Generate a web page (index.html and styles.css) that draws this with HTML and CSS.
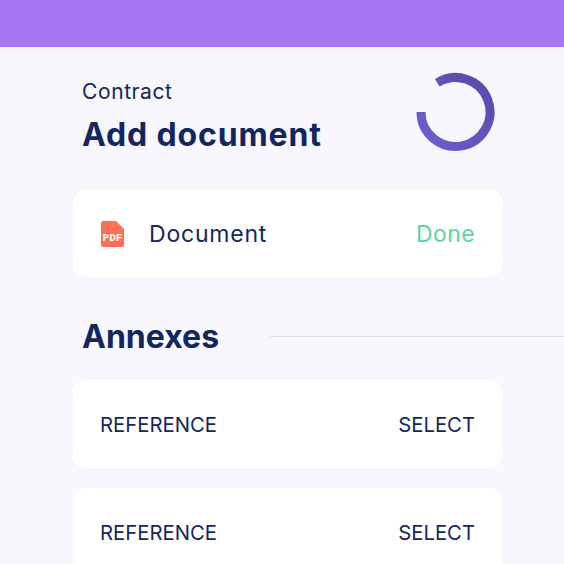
FILE: index.html
```html
<!DOCTYPE html>
<html lang="en">
<head>
    <meta charset="UTF-8">
    <meta name="viewport" content="width=device-width, initial-scale=1.0">
    <title>Add document</title>
    <link rel="stylesheet" href="styles.css">
</head>
<body>

    <!-- Top bar -->
    <div class="top-bar"></div>

    <main class="content">

        <!-- Header -->
        <header class="page-header">
            <div class="titles">
                <p class="eyebrow">Contract</p>
                <h1 class="page-title">Add document</h1>
            </div>
            <svg class="progress" width="80" height="80" viewBox="0 0 80 80">
                <defs>
                    <linearGradient id="ringGradient" x1="0" y1="1" x2="1" y2="0">
                        <stop offset="0" stop-color="#6c5fd2"/>
                        <stop offset="1" stop-color="#574aa8"/>
                    </linearGradient>
                </defs>
                <path d="M5 40 A34.5 34.5 0 1 0 21.3 10.7" fill="none" stroke="url(#ringGradient)" stroke-width="9"/>
            </svg>
        </header>

        <!-- Document card -->
        <section class="card card-document">
            <div class="card-left">
                <svg class="pdf-icon" width="23" height="26" viewBox="0 0 23 26">
                    <path d="M2 0 H15 L23 8 V24 A2 2 0 0 1 21 26 H2 A2 2 0 0 1 0 24 V2 A2 2 0 0 1 2 0 Z" fill="#fd6f57"/>
                    <text class="pdf-label" x="11.5" y="20" text-anchor="middle">PDF</text>
                </svg>
                <span class="doc-name">Document</span>
            </div>
            <span class="status-done">Done</span>
        </section>

        <!-- Annexes -->
        <div class="section-head">
            <h2 class="section-title">Annexes</h2>
            <div class="section-line"></div>
        </div>

        <section class="card card-annex">
            <span class="annex-text">REFERENCE</span>
            <span class="annex-text">SELECT</span>
        </section>

        <section class="card card-annex">
            <span class="annex-text">REFERENCE</span>
            <span class="annex-text">SELECT</span>
        </section>

    </main>

</body>
</html>
```

FILE: styles.css
```css
html, body {
    height: 100%;
}

body {
    margin: 0;
    font-family: "Inter", "Open Sans", sans-serif;
    color: #14265f;
    background-color: #f8f7fe;
    overflow: hidden;
}

/* Top bar */
.top-bar {
    height: 47px;
    background-color: #a875f2;
}

.content {
    height: 517px;
    box-sizing: border-box;
    padding: 25px 0 0 73px;
    overflow: hidden;
}

/* Header */
.page-header {
    display: flex;
    justify-content: space-between;
    align-items: flex-start;
    width: 429px;
    height: 118px;
}

.titles {
    padding: 10px 0 0 9px;
}

.eyebrow {
    margin: 0;
    font-size: 21px;
    line-height: 20px;
    letter-spacing: 0.6px;
}

.page-title {
    margin: 15px 0 0;
    font-size: 32px;
    line-height: 36px;
    font-weight: 700;
    letter-spacing: 0.85px;
}

.progress {
    margin-right: 6px;
}

/* Cards */
.card {
    display: flex;
    justify-content: space-between;
    align-items: center;
    width: 429px;
    box-sizing: border-box;
    padding: 0 27px;
    background-color: #fff;
    border-radius: 13px;
}

.card-document {
    height: 87px;
}

.card-annex {
    height: 88px;
    margin-bottom: 20px;
}

.card-left {
    display: flex;
    align-items: center;
    gap: 25px;
    padding-left: 1px;
}

.pdf-icon {
    display: block;
}

.pdf-label {
    font-family: "Liberation Mono", monospace;
    font-size: 11px;
    font-weight: 700;
    fill: #fff;
}

.doc-name {
    font-size: 23px;
    letter-spacing: 0.8px;
}

.status-done {
    font-size: 23px;
    letter-spacing: 0.4px;
    color: #5ad79b;
}

/* Annexes */
.section-head {
    display: flex;
    align-items: center;
    box-sizing: border-box;
    height: 103px;
    padding-top: 16px;
}

.section-title {
    margin: 0;
    padding-left: 9px;
    font-size: 32px;
    font-weight: 700;
    width: 197px;
    box-sizing: border-box;
}

.section-line {
    flex: 1;
    height: 1px;
    background-color: #e2e1e8;
}

.annex-text {
    font-size: 20.3px;
}
```
